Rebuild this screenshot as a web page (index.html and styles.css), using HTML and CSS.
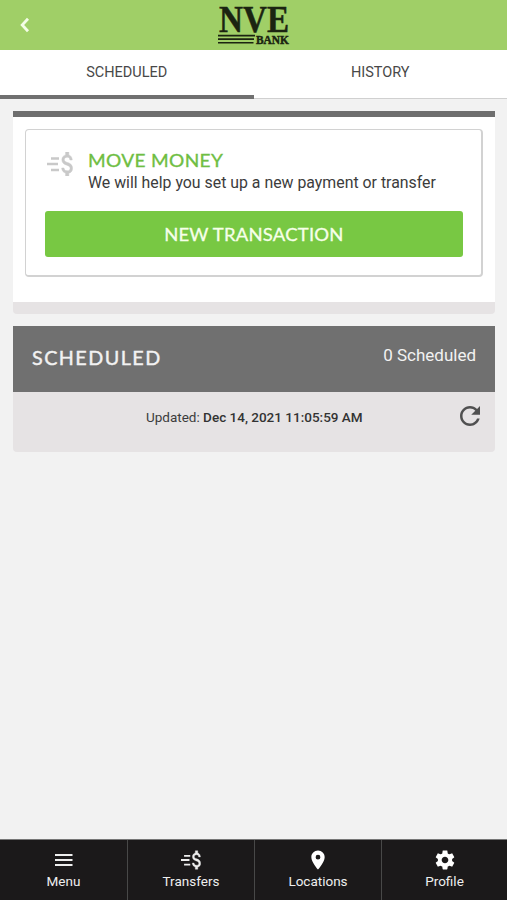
FILE: index.html
```
<!DOCTYPE html>
<html lang="en">
<head>
<meta charset="utf-8">
<title>NVE Bank</title>
<link rel="stylesheet" href="styles.css">
</head>
<body>
<svg class="defs" width="0" height="0">
  <symbol id="transfer" viewBox="0 0 26 24">
    <path d="M4 6.5h8M0 12h11M4 18h8" fill="none" stroke="currentColor" stroke-width="2.3"/>
    <path transform="translate(7.9 -4) scale(1.07 1.333)" d="M11.8 10.9c-2.27-.59-3-1.2-3-2.15 0-1.09 1.01-1.85 2.7-1.85 1.78 0 2.44.85 2.5 2.1h2.21c-.07-1.72-1.12-3.3-3.21-3.81V3h-3v2.16c-1.94.42-3.5 1.68-3.5 3.61 0 2.31 1.91 3.46 4.7 4.13 2.5.6 3 1.48 3 2.41 0 .69-.49 1.79-2.7 1.79-2.06 0-2.87-.92-2.98-2.1h-2.2c.12 2.19 1.76 3.42 3.68 3.83V21h3v-2.15c1.95-.37 3.5-1.5 3.5-3.55 0-2.84-2.43-3.81-4.7-4.4z" fill="currentColor" stroke="currentColor" stroke-width=".4"/>
  </symbol>
</svg>
<div class="app">
  <header class="top">
    <svg class="back" width="10" height="16" viewBox="0 0 10 16"><path d="M8 1.8 2.2 8 8 14.2" fill="none" stroke="#f4fde6" stroke-width="2.8"/></svg>
    <svg class="logo" width="76" height="50" viewBox="0 0 76 50" fill="#1b2411">
      <text class="serif" x="1" y="32" font-size="37.500" textLength="70" lengthAdjust="spacingAndGlyphs">NVE</text>
      <path d="M0 34.800h37v1.600H0zM0 38.300h36v1.600H0zM0 42h35.500v1.600H0z"/>
      <text class="serif" x="38" y="44" font-size="12.500" textLength="33" lengthAdjust="spacingAndGlyphs">BANK</text>
    </svg>
  </header>
  <nav class="tabs">
    <div class="tab active">SCHEDULED</div>
    <div class="tab">HISTORY</div>
  </nav>
  <main>
    <section class="move">
      <div class="box">
        <div class="intro">
          <svg class="money" width="26" height="24"><use href="#transfer"/></svg>
          <div>
            <h2>MOVE MONEY</h2>
            <p>We will help you set up a new payment or transfer</p>
          </div>
        </div>
        <div class="button"><span>NEW TRANSACTION</span></div>
      </div>
    </section>
    <section class="scheduled">
      <div class="head"><h3>SCHEDULED</h3><span>0 Scheduled</span></div>
      <div class="updated">
        <span>Updated: <b>Dec 14, 2021 11:05:59 AM</b></span>
        <svg class="refresh" width="20" height="20" viewBox="4 4 16 16"><path fill="#505050" d="M17.65 6.35C16.2 4.9 14.21 4 12 4c-4.420 0-7.990 3.580-7.990 8s3.570 8 7.990 8c3.730 0 6.840-2.550 7.730-6h-2.080c-.82 2.330-3.040 4-5.650 4-3.310 0-6-2.690-6-6s2.690-6 6-6c1.660 0 3.140.69 4.220 1.780L13 11h7V4l-2.350 2.350z"/></svg>
      </div>
    </section>
  </main>
  <footer>
    <div class="item"><svg width="18" height="20" viewBox="0 0 18 20"><path d="M0 5h17.500M0 10h17.500M0 15h17.500" stroke="#eee" stroke-width="2"/></svg>Menu</div>
    <div class="item"><svg width="20" height="20"><use href="#transfer"/></svg>Transfers</div>
    <div class="item"><svg width="14" height="20" viewBox="5 1.500 14 21"><path fill="#fff" d="M12 2C8.130 2 5 5.130 5 9c0 5.250 7 13 7 13s7-7.750 7-13c0-3.870-3.130-7-7-7zm0 9.500a2.500 2.500 0 0 1 0-5 2.500 2.500 0 0 1 0 5z"/></svg>Locations</div>
    <div class="item"><svg width="20" height="20" viewBox="1.500 1.500 21 21"><path fill="#fff" d="M19.430 12.980c.04-.32.070-.64.070-.98s-.03-.66-.07-.98l2.110-1.650c.19-.15.240-.42.120-.64l-2-3.460c-.12-.22-.39-.3-.61-.22l-2.490 1c-.52-.4-1.080-.73-1.690-.98l-.38-2.650C14.460 2.180 14.250 2 14 2h-4c-.25 0-.46.180-.49.420l-.38 2.650c-.61.25-1.170.59-1.690.98l-2.490-1c-.23-.09-.49 0-.61.220l-2 3.460c-.13.220-.07.490.12.640l2.110 1.650c-.04.32-.07.650-.07.980s.03.660.07.980l-2.110 1.650c-.19.150-.24.420-.12.640l2 3.460c.12.220.39.300.61.220l2.490-1c.52.400 1.080.730 1.690.980l.38 2.650c.03.240.240.420.490.420h4c.25 0 .46-.18.490-.42l.38-2.650c.61-.25 1.170-.59 1.690-.98l2.490 1c.23.090.49 0 .61-.22l2-3.460c.12-.22.070-.49-.12-.64l-2.110-1.650zM12 15.500c-1.930 0-3.500-1.570-3.500-3.500s1.570-3.500 3.500-3.500 3.500 1.570 3.500 3.500-1.570 3.500-3.500 3.500z"/></svg>Profile</div>
  </footer>
</div>
</body>
</html>
```
FILE: styles.css
```
* { box-sizing: border-box; }
body { margin: 0; font-family: Roboto, sans-serif; background: #f2f2f2; color: #3c3c3c; }
h2, h3, p { margin: 0; }
svg { display: block; flex: none; }
.defs { position: absolute; }
.app { height: 900px; display: flex; flex-direction: column; }
.top { height: 50px; background: #a0cf67; display: flex; padding-left: 20px; }
.back { margin-top: 17px; }
.logo { margin-left: 188px; overflow: visible; }
.serif { font-family: "Liberation Serif", serif; font-weight: 700; stroke: #1b2411; stroke-width: .5px; }
.tabs { height: 49px; display: flex; background: #fff; border-bottom: 1px solid #d0d0d0; }
.tab { flex: 1; height: 49px; line-height: 46px; text-align: center; font-size: 14.500px; color: #484848; }
.active { border-bottom: 4px solid #707070; }
main { flex: 1; padding: 12px 12px 0 13px; }
.move { height: 203px; background: #fff; border-top: 6px solid #6e6e6e; border-bottom: 12px solid #e6e3e4; border-radius: 0 0 4px 4px; padding: 12px; }
.box { height: 148px; border: 1px solid #d2d2d2; border-width: 1px 2px 2px 1px; border-radius: 4px; padding: 20px 18px 0 19px; }
.intro { display: flex; height: 61px; gap: 15px; padding-left: 2px; }
.money { color: #c9c9c9; margin-top: 2px; }
h2 { font: 400 17.500px/22px Lato, sans-serif; color: #6fbe43; -webkit-text-stroke: .3px #6fbe43; letter-spacing: .3px; white-space: nowrap; width: max-content; transform: scaleX(1.09); transform-origin: 0 50%; }
.intro p { font-size: 15.870px; line-height: 21px; white-space: nowrap; }
.button { height: 46px; line-height: 48px; border-radius: 3px; background: #78c843; color: #f6ffe9; text-align: center; font-family: Lato, sans-serif; font-size: 17.300px; letter-spacing: .2px; -webkit-text-stroke: .3px #f6ffe9; }
.button span { display: inline-block; transform: scaleX(1.07); }
.scheduled { margin-top: 12px; border-radius: 0 0 4px 4px; background: #e6e3e4; height: 126px; }
.head { height: 66px; background: #707070; color: #f2f2f2; display: flex; justify-content: space-between; padding: 0 19px; }
h3 { font: 400 19px/64px Lato, sans-serif; letter-spacing: 1.400px; -webkit-text-stroke: .4px #f2f2f2; transform: scaleX(1.04); transform-origin: 0 50%; }
.head span { font-size: 17px; line-height: 58px; }
.updated { display: flex; justify-content: space-between; padding: 14px 15px 0 133px; font-size: 13.500px; line-height: 23px; }
.updated b { font-weight: 500; color: #333; }
.updated span { white-space: nowrap; }
footer { height: 61px; display: grid; grid-template-columns: 128px 127px 127px 125px; background: #1b191a; border-top: 1px solid #777; color: #eee; }
.item { display: flex; flex-direction: column; align-items: center; padding-top: 10px; font-size: 13.500px; line-height: 22px; border-right: 1px solid #484848; }
.item:last-child { border: 0; }
```
